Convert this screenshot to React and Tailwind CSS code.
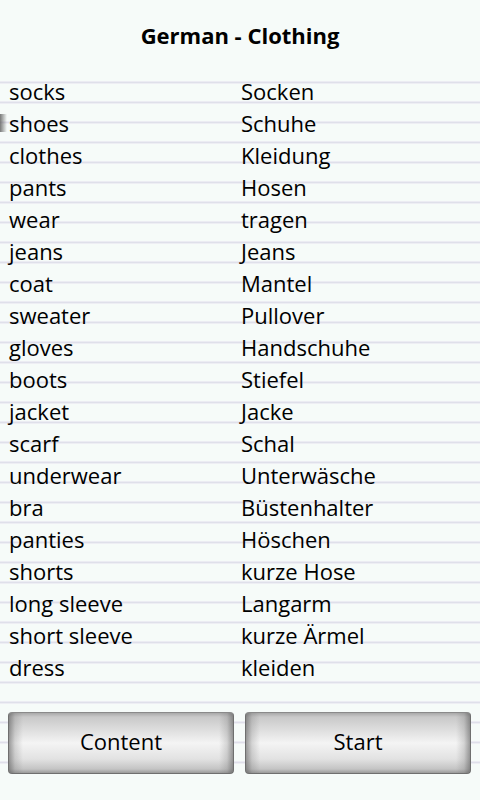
const words = [
  ["socks", "Socken"],
  ["shoes", "Schuhe"],
  ["clothes", "Kleidung"],
  ["pants", "Hosen"],
  ["wear", "tragen"],
  ["jeans", "Jeans"],
  ["coat", "Mantel"],
  ["sweater", "Pullover"],
  ["gloves", "Handschuhe"],
  ["boots", "Stiefel"],
  ["jacket", "Jacke"],
  ["scarf", "Schal"],
  ["underwear", "Unterwäsche"],
  ["bra", "Büstenhalter"],
  ["panties", "Höschen"],
  ["shorts", "kurze Hose"],
  ["long sleeve", "Langarm"],
  ["short sleeve", "kurze Ärmel"],
  ["dress", "kleiden"],
];

function GlossButton({ children }) {
  return (
    <button className="relative flex-1 h-[62px] pb-[3px] rounded-[4px] border border-[#6f6f6f] border-t-[#8a8a8a] bg-[linear-gradient(to_bottom,#a9a9a9_0px,#c9c9c9_4px,#d9d9d9_14px,#f4f4f4_30px,#e2e2e2_46px,#c4c4c4_56px,#9a9a9a_100%)] overflow-hidden">
      {/* darker side edges */}
      <span className="absolute inset-0 bg-[linear-gradient(to_right,rgba(80,80,80,0.55)_0px,rgba(120,120,120,0.25)_6px,transparent_14px,transparent_calc(100%-14px),rgba(120,120,120,0.25)_calc(100%-6px),rgba(80,80,80,0.55)_100%)]" />
      <span className="relative text-[22px] text-black">{children}</span>
    </button>
  );
}

export default function App() {
  return (
    <div
      className="w-[480px] h-[800px] bg-[#f6fbf9] flex flex-col overflow-hidden"
      style={{ fontFamily: '"Open Sans", "Noto Sans", sans-serif' }}
    >
      {/* title */}
      <div className="h-[76px] flex items-center justify-center pb-[6px]">
        <h1 className="text-[22px] font-bold text-black">German - Clothing</h1>
      </div>

      {/* lined paper area */}
      <div className="relative h-[702px] flex flex-col bg-[repeating-linear-gradient(to_bottom,transparent_0px,transparent_5px,#ececf3_5px,#ececf3_6px,#dfe0ea_6px,#dfe0ea_7px,#eeeef4_7px,#eeeef4_8px,transparent_8px,transparent_20px)]">
        {/* overscroll edge shade */}
        <div className="absolute left-0 top-[38px] w-[7px] h-[18px] bg-[linear-gradient(to_right,rgba(90,90,90,0.8),transparent)]" />

        <div className="flex flex-col">
          {words.map(([en, de]) => (
            <div key={en} className="flex h-[32px] items-center pb-[2px] text-[22px] text-black leading-none">
              <span className="w-[241px] pl-[9px]">{en}</span>
              <span>{de}</span>
            </div>
          ))}
        </div>

        <div className="flex gap-[11px] pl-[8px] pr-[9px] mt-[28px]">
          <GlossButton>Content</GlossButton>
          <GlossButton>Start</GlossButton>
        </div>
      </div>
    </div>
  );
}
